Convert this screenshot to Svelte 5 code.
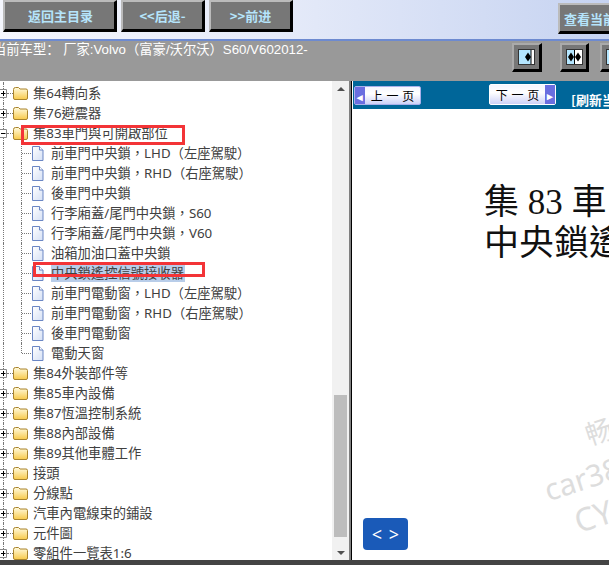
<script>
  const tree = [
    { label: '集60', type: 'closed' },
    { label: '集64轉向系', type: 'closed' },
    { label: '集76避震器', type: 'closed' },
    { label: '集83車門與可開啟部位', type: 'open' },
    { label: '前車門中央鎖，LHD（左座駕駛）', type: 'doc' },
    { label: '前車門中央鎖，RHD（右座駕駛）', type: 'doc' },
    { label: '後車門中央鎖', type: 'doc' },
    { label: '行李廂蓋/尾門中央鎖，S60', type: 'doc' },
    { label: '行李廂蓋/尾門中央鎖，V60', type: 'doc' },
    { label: '油箱加油口蓋中央鎖', type: 'doc' },
    { label: '中央鎖遙控信號接收器', type: 'doc', selected: true },
    { label: '前車門電動窗，LHD（左座駕駛）', type: 'doc' },
    { label: '前車門電動窗，RHD（右座駕駛）', type: 'doc' },
    { label: '後車門電動窗', type: 'doc' },
    { label: '電動天窗', type: 'doc', last: true },
    { label: '集84外裝部件等', type: 'closed' },
    { label: '集85車內設備', type: 'closed' },
    { label: '集87恆溫控制系統', type: 'closed' },
    { label: '集88內部設備', type: 'closed' },
    { label: '集89其他車體工作', type: 'closed' },
    { label: '接頭', type: 'closed' },
    { label: '分線點', type: 'closed' },
    { label: '汽車內電線束的鋪設', type: 'closed' },
    { label: '元件圖', type: 'closed' },
    { label: '零組件一覽表1:6', type: 'closed' }
  ];
</script>

<main>
  <header>
    <button class="bevel first">返回主目录</button>
    <button class="bevel">&lt;&lt;后退-</button>
    <button class="bevel">&gt;&gt;前进</button>
    <button class="bevel view">查看当前</button>
  </header>

  <div class="infobar">
    <span class="model">当前车型： 厂家:Volvo（富豪/沃尔沃）S60/V602012-</span>
    <div class="tools">
      <span class="tool">
        <svg viewBox="0 0 17 16" width="17" height="16">
          <rect x=".5" y=".5" width="16" height="15" fill="#b4e6ff" stroke="#333" />
          <rect x="13" y="1" width="3" height="14" fill="#fff" />
          <path d="M13 1v14" stroke="#000" />
          <path d="M10.500 3.500l3 4.500-3 4.500-3-4.500z" fill="#000" transform="translate(-.5)" />
        </svg>
      </span>
      <span class="tool">
        <svg viewBox="0 0 17 16" width="17" height="16">
          <rect x=".5" y=".5" width="16" height="15" fill="#b4e6ff" stroke="#333" />
          <rect x="8.500" y="1" width="7.500" height="14" fill="#fff" />
          <path d="M8.500 1v14" stroke="#000" />
          <path d="M5 3.500l3 4.500-3 4.500-3-4.500zM12 3.500l3 4.500-3 4.500-3-4.500z" fill="#000" />
        </svg>
      </span>
      <span class="tool">
        <svg viewBox="0 0 17 16" width="17" height="16">
          <rect x=".5" y=".5" width="16" height="15" fill="#b4e6ff" stroke="#333" />
        </svg>
      </span>
    </div>
  </div>

  <div class="body">
    <div class="tree">
      <ul lang="zh-Hant">
        {#each tree as row}
          <li class:child={row.type === 'doc'} class:last={row.last}>
            {#if row.type === 'doc'}
              <span class="elbow"></span>
              <svg class="icon doc" viewBox="0 0 13 15" width="13" height="15">
                <defs>
                  <linearGradient id="page" x1="0" y1="0" x2="1" y2="1">
                    <stop offset="0" stop-color="#fff" />
                    <stop offset="1" stop-color="#d5e0f5" />
                  </linearGradient>
                </defs>
                <path d="M1.500 .5h7l3.500 3.500v10.500h-10.500z" fill="url(#page)" stroke="#6a86c4" />
                <path d="M8.500 .5v3.500h3.500" fill="#fff" stroke="#6a86c4" />
              </svg>
            {:else}
              <svg class="box" viewBox="0 0 7 9" width="7" height="9">
                <path d="M-1 .5h7.500v8h-7.500z" fill="#fff" stroke="#888" />
                <path d="M1 4.500h4.500" stroke="#000" />
                {#if row.type === 'closed'}<path d="M3.500 2v5" stroke="#000" />{/if}
              </svg>
              <span class="dash"></span>
              <svg class="icon" viewBox="0 0 15 13" width="15" height="13">
                <defs>
                  <linearGradient id="fold" x1="0" y1="0" x2="0" y2="1">
                    <stop offset="0" stop-color="#fffbe0" />
                    <stop offset="1" stop-color="#f8c94a" />
                  </linearGradient>
                </defs>
                <path d="M.5 2.500q0-2 2-2h3l1.500 1.500h6q1.500 0 1.500 1.500v7.500q0 1.500-1.500 1.500h-11q-1.500 0-1.500-1.500z" fill="url(#fold)" stroke="#a9832c" />
              </svg>
            {/if}
            <span class="label" class:selected={row.selected}>{row.label}</span>
          </li>
        {/each}
      </ul>
      <div class="mark mark-a"></div>
      <div class="mark mark-b"></div>
    </div>

    <div class="scrollbar">
      <span class="arrow up"></span>
      <span class="thumb"></span>
      <span class="arrow down"></span>
    </div>

    <div class="divider"></div>

    <section class="doc-pane">
      <div class="pager">
        <span class="page-btn prev"><b class="cap">◂</b><span>上 一 页</span></span>
        <span class="page-btn next"><span>下 一 页</span><b class="cap">▸</b></span>
        <span class="refresh">[刷新当前页]</span>
      </div>
      <div class="page">
        <h1>集 83 車門與可開啟部位<br />中央鎖遙控信號接收器</h1>
        <div class="stamp">
          <span class="s1">畅</span>
          <span class="s2">car38</span>
          <span class="s3">CY</span>
        </div>
        <button class="nav">&lt; &gt;</button>
      </div>
    </section>
  </div>
  <div class="footer"></div>
</main>

<style>
  :global(body) {
    margin: 0;
    overflow: hidden;
  }
  main {
    width: 609px;
    height: 565px;
    display: flex;
    flex-direction: column;
    overflow: hidden;
    font-family: "Liberation Sans", "Noto Sans CJK SC", sans-serif;
  }
  header {
    height: 39px;
    box-sizing: border-box;
    flex: none;
    display: flex;
    align-items: flex-start;
    gap: 4px;
    padding-left: 3px;
    background: linear-gradient(90deg, #f4f6fd, #e6ebf9 45%, #c6d3f1);
    white-space: nowrap;
  }
  .bevel {
    width: 84px;
    height: 32px;
    flex: none;
    padding: 0;
    box-sizing: border-box;
    background: #777;
    border-style: solid;
    border-width: 2px 3px 3px 2px;
    border-color: #bbb #000 #000 #bbb;
    color: #b5e4fb;
    font: bold 13px "Noto Sans CJK SC", sans-serif;
  }
  .first {
    width: 114px;
    padding-left: 2px;
  }
  .view {
    width: 60px;
    height: 31px;
    margin: 3px 0 0 261px;
    overflow: hidden;
    text-align: left;
    padding-left: 4px;
  }
  .infobar {
    height: 42px;
    box-sizing: border-box;
    flex: none;
    border-top: 2px solid #6d8ad0;
    background: #999;
    position: relative;
    color: #fff;
    font-size: 13.3px;
    white-space: nowrap;
  }
  .model {
    position: absolute;
    left: -7px;
    top: 1px;
    line-height: 15px;
  }
  .tools {
    position: absolute;
    left: 512px;
    top: 2px;
    display: flex;
  }
  .tool {
    width: 30px;
    height: 29px;
    box-sizing: border-box;
    flex: none;
    background: #777;
    border-style: solid;
    border-width: 2px 3px 3px 2px;
    border-color: #aaa #000 #000 #aaa;
    display: flex;
    align-items: center;
    justify-content: center;
    margin-right: 18px;
  }
  .tool + .tool {
    width: 29px;
    margin-right: 11px;
  }
  .body {
    flex: 1;
    min-height: 0;
    display: flex;
  }
  .tree {
    width: 332px;
    flex: none;
    position: relative;
    overflow: hidden;
    background: #fff;
  }
  ul {
    list-style: none;
    margin: -18px 0 0;
    padding: 0;
    font-size: 13.3px;
    color: #404040;
    font-family: "Noto Sans", "Noto Sans CJK TC", sans-serif;
  }
  li {
    height: 20px;
    display: flex;
    align-items: center;
    white-space: nowrap;
    position: relative;
  }
  li::before {
    content: "";
    position: absolute;
    left: 3px;
    top: 0;
    bottom: 0;
    border-left: 1px dotted #777;
  }
  li.child {
    padding-left: 22px;
  }
  li.child::after {
    content: "";
    position: absolute;
    left: 21px;
    top: 0;
    bottom: 0;
    border-left: 1px dotted #777;
  }
  li.last::after {
    bottom: 10px;
  }
  .elbow {
    width: 9px;
    flex: none;
    border-top: 1px dotted #777;
  }
  .box {
    flex: none;
    display: block;
    position: relative;
    z-index: 1;
  }
  .dash {
    width: 6px;
    flex: none;
    border-top: 1px dotted #777;
  }
  .icon {
    flex: none;
    display: block;
  }
  .doc {
    margin-right: 7px;
  }
  .label {
    margin-left: 5px;
    line-height: 18px;
    padding-right: 1px;
  }
  .doc + .label {
    margin-left: 0;
  }
  .selected {
    background: #b8cde9;
  }
  .mark {
    position: absolute;
    border: 3px solid #f33437;
    box-sizing: border-box;
  }
  .mark-a {
    left: 21px;
    top: 44px;
    width: 164px;
    height: 20px;
  }
  .mark-b {
    left: 33px;
    top: 181px;
    width: 172px;
    height: 15px;
  }
  .scrollbar {
    width: 17px;
    flex: none;
    background: #f1f1f1;
    position: relative;
  }
  .thumb {
    position: absolute;
    left: 2px;
    right: 2px;
    top: 314px;
    height: 142px;
    background: #bdbdbd;
  }
  .arrow {
    position: absolute;
    left: 5px;
    border-left: 4px solid transparent;
    border-right: 4px solid transparent;
  }
  .up {
    top: 6px;
    border-bottom: 4px solid #505050;
  }
  .down {
    bottom: 5px;
    border-top: 4px solid #505050;
  }
  .divider {
    width: 4px;
    flex: none;
    background: linear-gradient(90deg, #808080 50%, #000 50%, #000 75%, #fff 75%);
  }
  .doc-pane {
    flex: 1;
    min-width: 0;
    display: flex;
    flex-direction: column;
    overflow: hidden;
  }
  .pager {
    height: 28px;
    flex: none;
    background: #006699;
    position: relative;
    white-space: nowrap;
  }
  .page-btn {
    position: absolute;
    height: 19px;
    width: 67px;
    box-sizing: border-box;
    display: flex;
    align-items: center;
    border: 1px solid #a9b0ea;
    border-radius: 2px;
    background: linear-gradient(#f4f5ff, #ffffff 40%, #cdd2f8);
    color: #000;
    font: 12px "Noto Sans CJK SC", sans-serif;
  }
  .page-btn span {
    flex: 1;
    text-align: center;
    word-spacing: 1px;
  }
  .prev {
    left: 1px;
    top: 5px;
  }
  .next {
    left: 136px;
    top: 3px;
    height: 21px;
    border-color: #fff;
  }
  .cap {
    width: 10px;
    align-self: stretch;
    display: flex;
    align-items: center;
    justify-content: center;
    background: #6a6ee0;
    color: #fff;
    font-size: 11px;
  }
  .refresh {
    position: absolute;
    left: 218px;
    top: 9px;
    color: #fff;
    font: bold 13px "Noto Sans CJK SC", serif;
  }
  .page {
    flex: 1;
    min-height: 0;
    position: relative;
    background: #fff;
    overflow: hidden;
  }
  h1 {
    margin: 0;
    position: absolute;
    left: 131px;
    top: 73px;
    font: 400 35px/41px "Liberation Serif", "Noto Sans CJK TC", serif;
    color: #111;
    white-space: nowrap;
  }
  .stamp span {
    position: absolute;
    color: #ddd;
    transform: rotate(-18deg);
    white-space: nowrap;
    font-family: "Noto Sans", "Noto Sans CJK SC", sans-serif;
  }
  .s1 {
    left: 232px;
    top: 302px;
    font-size: 27px;
  }
  .s2 {
    left: 190px;
    top: 349px;
    font-size: 30px;
  }
  .s3 {
    left: 221px;
    top: 385px;
    font-size: 32px;
  }
  .nav {
    position: absolute;
    left: 10px;
    top: 409px;
    width: 45px;
    height: 32px;
    padding: 0;
    border: 0;
    border-radius: 4px;
    background: #1a5ab8;
    color: #fff;
    font: 18px "Noto Sans", sans-serif;
    word-spacing: 2px;
  }
  .footer {
    height: 5px;
    flex: none;
    background: #444;
  }
</style>
